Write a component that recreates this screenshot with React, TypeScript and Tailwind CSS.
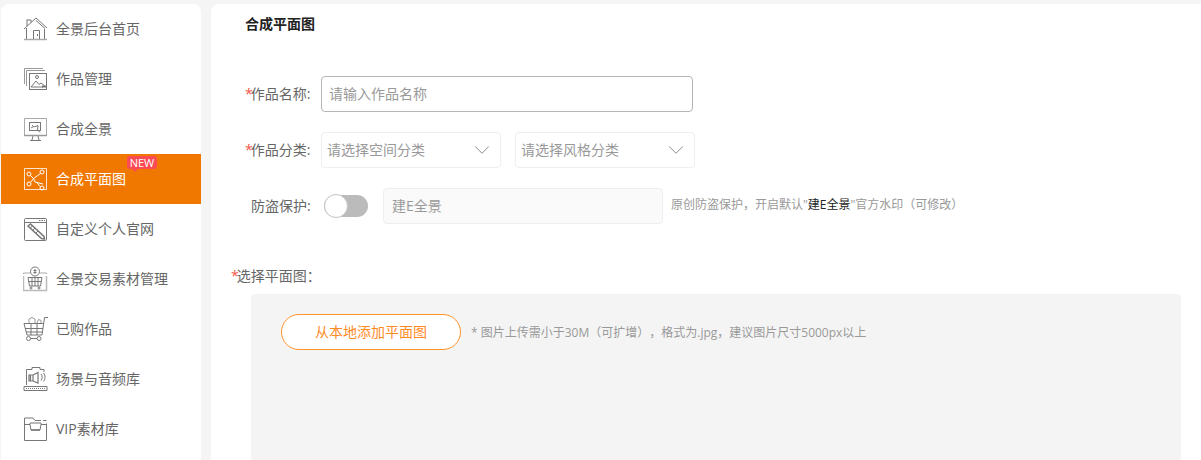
import React from 'react'
import { ChevronDown } from 'lucide-react'

const font = "font-['Open_Sans','Noto_Sans_CJK_SC',sans-serif]"

const HomeIcon = () => (
  <svg width="26" height="26" viewBox="0 0 26 26" fill="none" stroke="#777" strokeWidth="1">
    <path d="M1 13 L13 2 L24 12 M4 3.500 V10 M4 4 H8 V6.500 M13 4.500 L22 12.500 M3.500 12 V23 M21.500 13 V23" />
    <path d="M1 23.500 H24" stroke="#aaa" strokeWidth="1.500" />
    <path d="M10.500 23 V14.500 H16.500 V23" />
    <path d="M14.500 18 V20" />
  </svg>
)

const WorksIcon = () => (
  <svg width="26" height="26" viewBox="0 0 26 26" fill="none" stroke="#777" strokeWidth="1">
    <path d="M1.500 18 V2.500 H20" stroke="#999" />
    <path d="M3.500 20 V4.500 H22" stroke="#999" />
    <rect x="6.500" y="7.500" width="17" height="16" />
    <path d="M8 21 L13 15 L16 18.500 L18 17 L23 21 M8 21 H20" />
    <circle cx="14" cy="11" r="1.500" />
    <path d="M19 20.500 H23" strokeWidth="2" />
  </svg>
)

const PanoIcon = () => (
  <svg width="26" height="26" viewBox="0 0 26 26" fill="none" stroke="#777" strokeWidth="1">
    <path d="M1.500 19 V2.500 H23.500 V19" stroke="#aaa" />
    <path d="M1 19.500 H24" strokeWidth="1.500" stroke="#999" />
    <rect x="6.500" y="6.500" width="11" height="8" />
    <path d="M9 9 L11 11 M11 11 L15 9.500 L14.500 14 L17 16.500 M8 12 L10 11" />
    <path d="M7 24.500 H18 M10 20 L9 24 M15 20 L16 24" />
  </svg>
)

const PlanIcon = () => (
  <svg width="26" height="26" viewBox="0 0 26 26" fill="none" stroke="#fff" strokeWidth="1">
    <path d="M1.500 23.500 V2.500 H23.500 V23.500 H1.500 Z" strokeOpacity="0.8" />
    <circle cx="6" cy="8" r="2" />
    <circle cx="19" cy="6" r="2" />
    <circle cx="6" cy="18" r="2" />
    <circle cx="19" cy="22" r="2" />
    <path d="M7.500 9.500 L10.500 12.500 L17.500 7.500 M10.500 12.500 L7.500 16.500 M10.500 12.500 L12 16 L20 18 M14 16.500 L17 20.500" />
  </svg>
)

const SiteIcon = () => (
  <svg width="26" height="26" viewBox="0 0 26 26" fill="none" stroke="#777" strokeWidth="1">
    <rect x="1.500" y="2.500" width="22" height="22" rx="1" />
    <path d="M1.500 6.500 H23.500" />
    <path d="M16 4.500 H22" strokeDasharray="1.500 1" />
    <path d="M5 10 L7.500 8 L21 20.500 L21.500 23 L18.500 22.500 Z" strokeWidth="1.500" />
    <path d="M7 12 L9.500 10 M10 14 L12 12 M13 17 L15 15" />
  </svg>
)

const TradeIcon = () => (
  <svg width="26" height="26" viewBox="0 0 26 26" fill="none" stroke="#777" strokeWidth="1">
    <circle cx="12" cy="5.500" r="4.500" />
    <path d="M12 3 V8 M10.500 4.500 H13.500 M10.500 6.500 H13.500" />
    <path d="M0.500 7 H7 M17 7 H23.500 M0.500 7 V8 M23.500 7 V8" stroke="#aaa" />
    <path d="M0.500 10 V24.500 H23.500 V10" stroke="#bbb" strokeWidth="1.500" />
    <path d="M5 11.500 H19 L17.500 20 H6.500 Z M9 11.500 V20 M12 11.500 V20 M15 11.500 V20 M5.500 15.500 H18.500" />
    <circle cx="8" cy="22" r="1" />
    <circle cx="16" cy="22" r="1" />
  </svg>
)

const CartIcon = () => (
  <svg width="26" height="26" viewBox="0 0 26 26" fill="none" stroke="#777" strokeWidth="1">
    <path d="M25 1.500 H21.500 L19 19 H4 L1 7.500 H20.500" />
    <path d="M2 12.500 H20 M3 16 H19.500 M8 7.500 V19 M14 7.500 V19" />
    <path d="M6 7 V3 L9 1.500 L12 3 V7 M14 7 L15.500 3.500 L18 4.500 V7" stroke="#999" />
    <circle cx="5.500" cy="22.500" r="2" />
    <circle cx="16" cy="22.500" r="2" />
    <path d="M7.500 22.500 H14" />
  </svg>
)

const AudioIcon = () => (
  <svg width="26" height="26" viewBox="0 0 26 26" fill="none" stroke="#777" strokeWidth="1">
    <path d="M3.500 19 V3.500 H9 V1.500 H17 V3.500 H21 V6" />
    <path d="M1 24.500 V20.500 H24 V24.500 Z" />
    <path d="M6 9 H10 V15 H6 Z M10 9 L15 6.500 V17 L10 15 M7.500 9 V15" strokeWidth="1.200" />
    <path d="M18 8 C19.500 10 19.500 12.500 18 14.500 M20.500 7 C22.500 9.500 22.500 13 20.500 15.500" />
    <path d="M3 22.500 H22" strokeDasharray="1 1" />
  </svg>
)

const VipIcon = () => (
  <svg width="26" height="26" viewBox="0 0 26 26" fill="none" stroke="#777" strokeWidth="1">
    <path d="M1.500 24.500 V2 H10 L12 4.500 H18 M20 4.500 H23.500 M23.500 7.500 V24.500 H1.500" />
    <path d="M1.500 8.500 H7 V7 H18 V8.500 H23.500" />
    <path d="M7 8.500 L8 14 H17 L18 8.500" />
    <path d="M8 14 H17" strokeWidth="1.500" />
  </svg>
)

const menu = [
  { label: '全景后台首页', icon: <HomeIcon /> },
  { label: '作品管理', icon: <WorksIcon /> },
  { label: '合成全景', icon: <PanoIcon /> },
  { label: '合成平面图', icon: <PlanIcon />, active: true },
  { label: '自定义个人官网', icon: <SiteIcon /> },
  { label: '全景交易素材管理', icon: <TradeIcon /> },
  { label: '已购作品', icon: <CartIcon /> },
  { label: '场景与音频库', icon: <AudioIcon /> },
  { label: 'VIP素材库', icon: <VipIcon /> },
]

const Star = () => <span className="tracking-[-2px] text-[#f5574a]">*</span>

const Select = ({ text }: { text: string }) => (
  <div className="flex h-9 w-[180px] items-center justify-between rounded border border-[#eeeeee] pr-[5px] pl-[5px] text-[#999999]">
    <span>{text}</span>
    <ChevronDown size={26} strokeWidth={0.9} className="text-[#888888]" />
  </div>
)

const App = () => {
  return (
    <div className={`flex h-[460px] w-[1201px] overflow-hidden bg-[#f5f5f5] pt-1 pl-px text-sm leading-5 [text-spacing-trim:space-all] ${font}`}>
      <div className="h-[456px] w-[200px] shrink-0 rounded-t-lg bg-white">
        {menu.map((item) => (
          <div
            key={item.label}
            className={`relative flex h-[50px] items-center gap-[7px] pl-[22px] ${item.active ? 'bg-[#f07800] text-white' : 'text-[#666666]'}`}
          >
            {item.icon}
            <span>{item.label}</span>
            {item.active && (
              <div className="absolute top-[2px] left-[126px] flex h-[13px] w-[30px] items-center justify-center rounded-[3px] bg-[#fb4b55] text-[11px] text-white after:absolute after:top-full after:left-[5px] after:border-x-[3px] after:border-t-[3px] after:border-x-transparent after:border-t-[#fb4b55] after:content-['']">
                NEW
              </div>
            )}
          </div>
        ))}
      </div>
      <div className="ml-[10px] h-[456px] flex-1 rounded-tl-lg bg-white">
        <div className="pt-[10px] pl-[34px] font-bold text-[#222222]">合成平面图</div>
        <div className="mt-[42px] flex items-center pl-[34px]">
          <label className="w-[76px] text-[#666666]">
            <Star />作品名称:
          </label>
          <div className="flex h-9 w-[372px] items-center rounded border border-[#b5b5b5] pl-[7px] text-[#999999]">
            请输入作品名称
          </div>
        </div>
        <div className="mt-5 flex items-center gap-[14px] pl-[34px]">
          <label className="-mr-[14px] w-[76px] text-[#666666]">
            <Star />作品分类:
          </label>
          <Select text="请选择空间分类" />
          <Select text="请选择风格分类" />
        </div>
        <div className="mt-5 flex items-center pl-[40px]">
          <label className="w-[73px] text-[#666666]">防盗保护:</label>
          <div className="relative h-[22px] w-[44px] rounded-full bg-[#bbbbbb]">
            <div className="absolute top-0 left-0 h-[24px] w-[24px] -translate-y-px rounded-full border border-[#c4c4c4] bg-white" />
          </div>
          <div className="ml-[15px] flex h-9 w-[280px] items-center rounded border border-[#eeeeee] bg-[#fafafa] pl-2 text-[#999999]">
            建E全景
          </div>
          <p className="ml-2 pb-[2px] text-xs text-[#999999]">
            原创防盗保护，开启默认"<span className="text-[#222222]">建E全景</span>"官方水印（可修改）
          </p>
        </div>
        <div className="mt-[42px] pl-5 text-[#666666]">
          <Star />选择平面图：
        </div>
        <div className="mt-[8px] ml-10 h-[200px] w-[930px] rounded-t bg-[#f4f4f4] pt-5 pl-[30px]">
          <div className="flex items-center">
            <button className="h-9 w-[180px] rounded-full border border-[#ff9326] bg-white text-[#ff8a1f]">
              从本地添加平面图
            </button>
            <p className="ml-[10px] pt-[2px] text-xs text-[#999999]">
              * 图片上传需小于30M（可扩增），格式为.jpg，建议图片尺寸5000px以上
            </p>
          </div>
        </div>
      </div>
    </div>
  )
}

export default App
